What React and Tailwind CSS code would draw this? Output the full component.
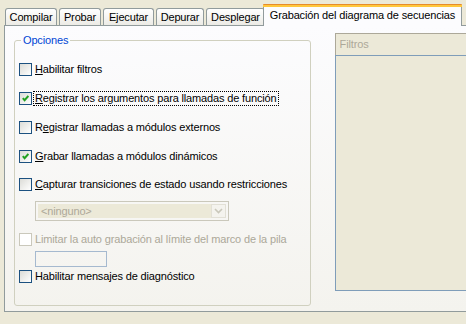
import React from "react";

const tabs = [
  { label: "Compilar", w: "w-[52px]" },
  { label: "Probar", w: "w-[42px]" },
  { label: "Ejecutar", w: "w-[51px]" },
  { label: "Depurar", w: "w-[48px]" },
  { label: "Desplegar", w: "w-[59px]" },
];

const CheckBox = ({ checked, disabled }) => (
  <span
    className={
      disabled
        ? "w-[13px] h-[13px] shrink-0 border border-[#CAC8BB] bg-white flex items-center justify-center"
        : "w-[13px] h-[13px] shrink-0 border border-[#1C5180] bg-linear-to-br from-[#DCDCD7] to-white flex items-center justify-center"
    }
  >
    {checked && (
      <svg width="7" height="7" viewBox="0 0 7 7">
        <polyline
          points="0.8,3.2 2.6,5.2 6.4,1"
          fill="none"
          stroke="#21A121"
          strokeWidth="2"
        />
      </svg>
    )}
  </span>
);

const Option = ({ checked, disabled, focused, className, children }) => (
  <div className={`flex items-center h-[13px] ${className}`}>
    <CheckBox checked={checked} disabled={disabled} />
    <span
      className={
        focused
          ? "ml-px px-px leading-[13px] border border-dotted border-black"
          : "ml-[2px] leading-[13px] border border-transparent"
      }
    >
      <span className={disabled ? "text-[#ACA899]" : "text-black"}>{children}</span>
    </span>
  </div>
);

const App = () => {
  return (
    <div className="w-[466px] h-[324px] overflow-hidden bg-[#ECE9D8] font-['Liberation_Sans',sans-serif] text-[11px] tracking-[-0.15px] text-black">
      {/* tab strip */}
      <div className="flex items-end h-[25px] pl-[5px]">
        {tabs.map((t, i) => (
          <div
            key={t.label}
            className={`${t.w} ${i > 0 ? "ml-[2px]" : ""} h-[17px] flex items-center justify-center border border-b-0 border-[#919B9C] rounded-t-[3px] bg-linear-to-b from-white to-[#ECEBE6]`}
          >
            {t.label}
          </div>
        ))}
        <div className="relative z-10 -ml-[2px] -mb-px w-[199px] h-[22px] flex flex-col border-x border-[#919B9C] rounded-t-[3px] bg-[#FCFCFE]">
          <div className="h-px bg-[#E68B2C] rounded-t-[3px] -mx-px"></div>
          <div className="h-[2px] bg-[#FFC73C] -mx-px"></div>
          <div className="flex-1 flex items-center justify-center pb-[2px]">
            Grabación del diagrama de secuencias
          </div>
        </div>
      </div>

      {/* tab page */}
      <div className="ml-[4px] w-[470px] h-[287px] border border-[#919B9C] bg-linear-to-b from-[#FCFCFE] to-[#F4F3EE] flex items-start pl-[9px]">
        <fieldset className="mt-[8px] w-[300px] h-[272px] border border-[#D0D0BF] rounded-[3px]">
          <legend className="ml-[6px] px-[2px] leading-[13px] text-[#0046D5]">Opciones</legend>
          <div className="flex flex-col pl-[4px]">
            <Option className="mt-[16px]">
              <u>H</u>abilitar filtros
            </Option>
            <Option className="mt-[16px]" checked focused>
              <u>R</u>egistrar los argumentos para llamadas de función
            </Option>
            <Option className="mt-[16px]">
              R<u>e</u>gistrar llamadas a módulos externos
            </Option>
            <Option className="mt-[16px]" checked>
              <u>G</u>rabar llamadas a módulos dinámicos
            </Option>
            <Option className="mt-[15px]">
              <u>C</u>apturar transiciones de estado usando restricciones
            </Option>
            <div className="mt-[10px] ml-[16px] w-[194px] h-[20px] border border-[#CAC8BB] p-[2px] flex">
              <div className="flex-1 bg-[#ECE9D8] flex items-center pl-[3px] text-[#ACA899]">
                &lt;ninguno&gt;
              </div>
              <div className="w-[15px] border border-[#E2E0D6] bg-[#F4F3EE] flex items-center justify-center">
                <svg width="9" height="6" viewBox="0 0 9 6">
                  <polyline points="1,1 4.5,4.5 8,1" fill="none" stroke="#C9C7BA" strokeWidth="1.6" />
                </svg>
              </div>
            </div>
            <Option className="mt-[12px]" disabled>
              Limitar la auto grabación al límite del marco de la pila
            </Option>
            <div className="mt-[5px] ml-[16px] w-[72px] h-[16px] border border-[#A5B9CF]"></div>
            <Option className="mt-[3px]">Habilitar mensajes de diagnóstico</Option>
          </div>
        </fieldset>

        <div className="ml-[24px] mt-[7px] w-[140px] flex flex-col">
          <div className="h-[22px] border border-b-0 border-[#ACA899] bg-[#ECE9D8] flex items-center pl-[4px] text-[#ACA899]">
            Filtros
          </div>
          <div className="h-[236px] border border-[#7F9DB9] bg-[#ECE9D8]"></div>
        </div>
      </div>
    </div>
  );
};

export default App;
